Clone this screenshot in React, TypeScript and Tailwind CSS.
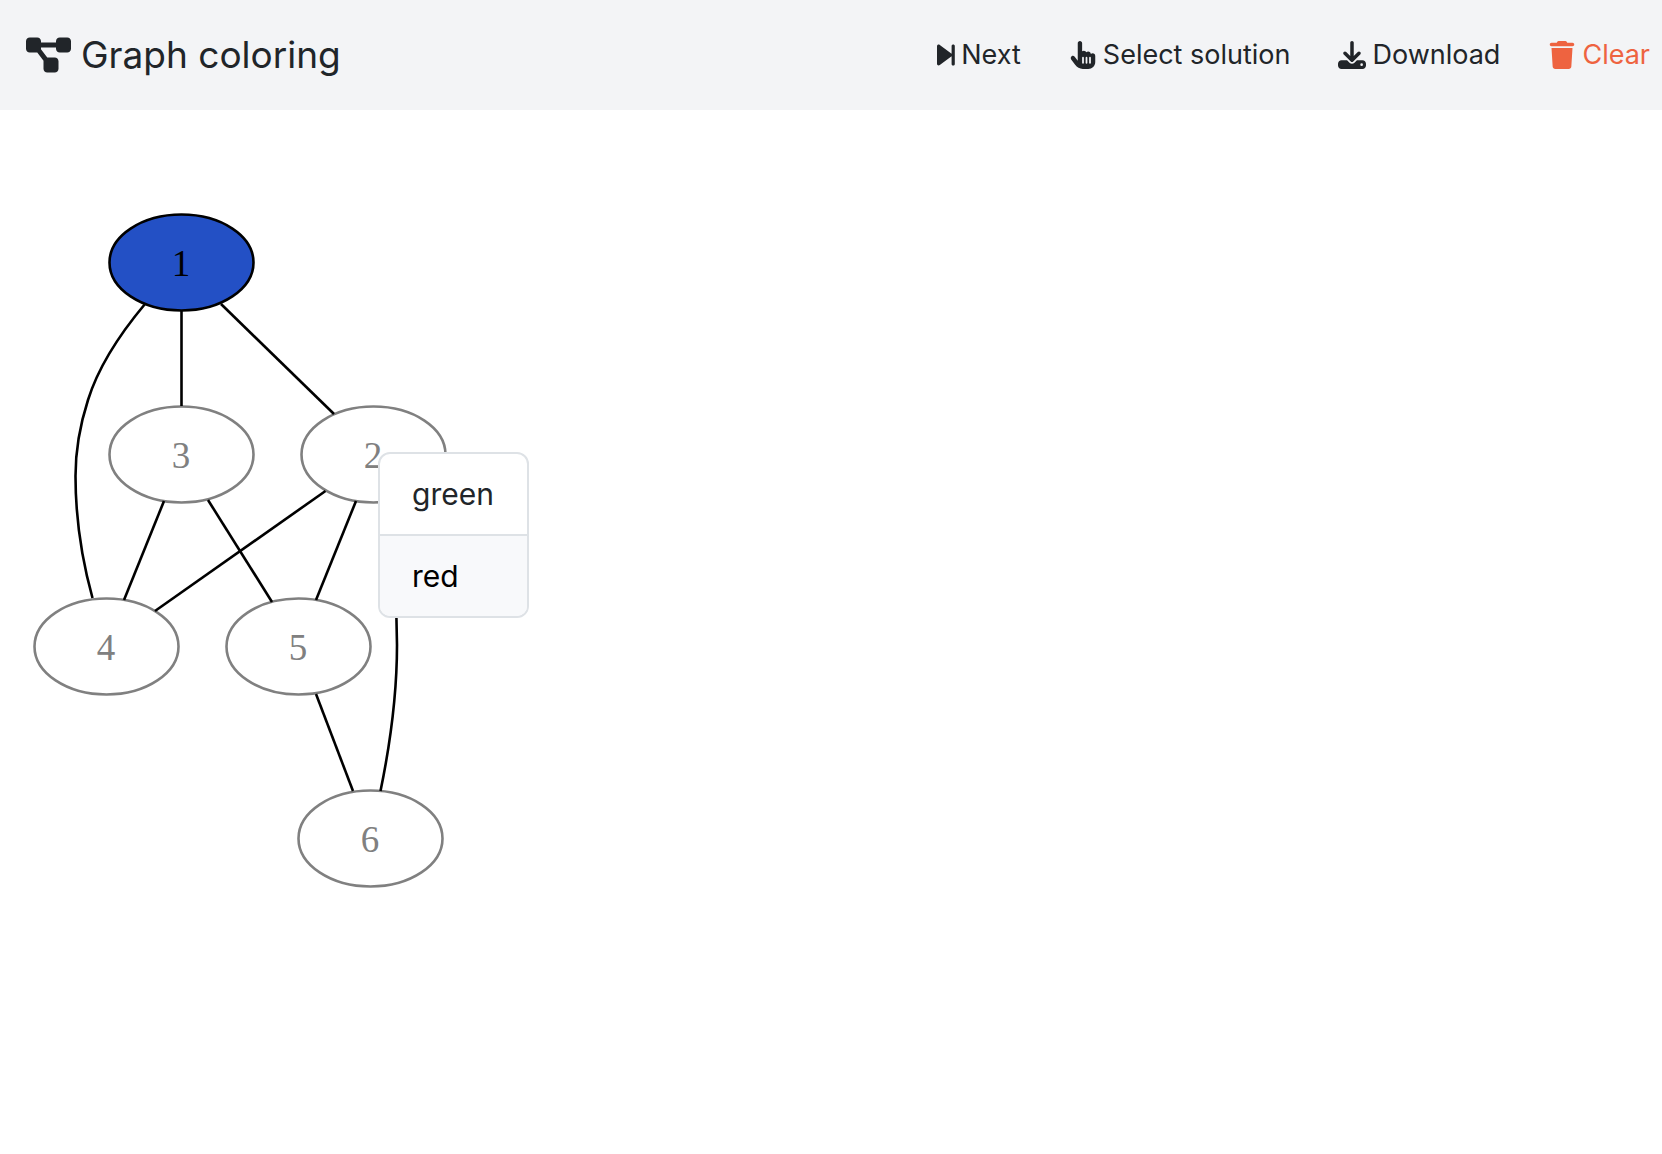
import type { ComponentType } from "react";
import { FaDiagramProject, FaDownload, FaHandPointer, FaTrash } from "react-icons/fa6";

type IconProps = { className?: string };
type GraphNode = { label: string; x: number; y: number; color?: string };
type Action = { label: string; Icon: ComponentType<IconProps>; tone: string };

function StepForward({ className }: IconProps) {
  return (
    <svg className={className} viewBox="0 0 18 28" fill="currentColor" aria-hidden="true">
      <path d="M0 5.2C0 3.7 1.6 3 2.8 3.9L14.6 12.8V5C14.6 3 17.8 3 17.8 5V23C17.8 25 14.6 25 14.6 23V15.2L2.8 24.1C1.6 25 0 24.3 0 22.8Z" />
    </svg>
  );
}

const nodes: GraphNode[] = [
  { label: "1", x: 181, y: 153, color: "#2350c5" },
  { label: "3", x: 181, y: 345 },
  { label: "2", x: 373, y: 345 },
  { label: "4", x: 106, y: 537 },
  { label: "5", x: 298, y: 537 },
  { label: "6", x: 370, y: 729 },
];

const edges = [
  "M145 194C119 225 98 258 88 290C79 318 75.5 340 75.5 366C75.5 408 82 450 92.5 488",
  "M181.5 201V296",
  "M221 194L334 304",
  "M164 391L124 490",
  "M208 390L272 492",
  "M325.5 381L155 501",
  "M356 391L316 490",
  "M384 391C392 435 397 490 397 535C397 585 390 635 380.5 681",
  "M316 584L353 681",
];

const actions: Action[] = [
  { label: "Next", Icon: StepForward, tone: "text-[#212529]" },
  { label: "Select solution", Icon: FaHandPointer, tone: "text-[#212529]" },
  { label: "Download", Icon: FaDownload, tone: "text-[#212529]" },
  { label: "Clear", Icon: FaTrash, tone: "text-[#ee6340]" },
];

function Header() {
  return (
    <header className="flex h-[110px] items-center justify-between bg-[#f3f4f6] pr-3 pl-[26px]">
      <h1 className="flex items-center gap-2.5 text-[37px] leading-[48px] text-[#212529]">
        <FaDiagramProject className="size-10 w-[45px]" aria-hidden="true" />
        Graph coloring
      </h1>
      <nav className="flex items-center gap-12">
        {actions.map(({ label, Icon, tone }) => (
          <button
            key={label}
            type="button"
            className={`flex items-center gap-1.5 text-[27px] leading-[42px] ${tone}`}
          >
            <Icon className="h-7 w-auto" />
            {label}
          </button>
        ))}
      </nav>
    </header>
  );
}

function Graph() {
  return (
    <svg width="560" height="800" viewBox="0 0 560 800" role="img" aria-label="Graph">
      {nodes.map(({ label, x, y, color }) => (
        <g key={label}>
          <ellipse
            cx={x + 0.5}
            cy={y - 0.5}
            rx="72"
            ry="48"
            fill={color ?? "white"}
            stroke={color ? "black" : "gray"}
            strokeWidth="2.6"
          />
          <text
            x={x}
            y={y + 13}
            textAnchor="middle"
            fill={color ? "black" : "gray"}
            className="font-['Liberation_Serif',serif] text-[37px]"
          >
            {label}
          </text>
        </g>
      ))}
      {edges.map((d) => (
        <path key={d} d={d} fill="none" stroke="black" strokeWidth="2.6" />
      ))}
    </svg>
  );
}

function ColorMenu() {
  return (
    <div className="absolute top-[342px] left-[378px] flex w-[151px] flex-col overflow-hidden rounded-xl border-2 border-[#dee2e6] bg-white text-[30px] leading-[48px]">
      <button type="button" className="border-b-2 border-[#dee2e6] px-8 py-4 text-left text-[#212529]">
        green
      </button>
      <button type="button" className="bg-[#f8f9fb] px-8 py-4 text-left text-black">
        red
      </button>
    </div>
  );
}

export default function App() {
  return (
    <div className="min-h-screen bg-white font-['Inter',sans-serif]">
      <Header />
      <main className="relative">
        <Graph />
        <ColorMenu />
      </main>
    </div>
  );
}
